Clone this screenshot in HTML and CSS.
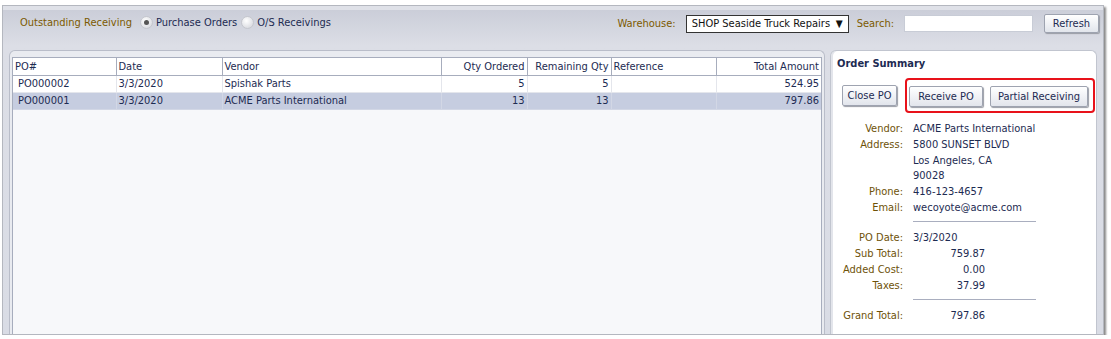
FILE: index.html
```html
<!DOCTYPE html>
<html>
<head>
    <title>Outstanding Receiving</title>
    <link rel="stylesheet" href="styles.css">
</head>
<body>
    <div class="window">
        <div class="toolbar">
            <span class="label">Outstanding Receiving</span>
            <label class="radio"><span class="dot checked"></span>Purchase Orders</label>
            <label class="radio"><span class="dot"></span>O/S Receivings</label>
            <span class="spacer"></span>
            <span class="label">Warehouse:</span>
            <div class="select">SHOP Seaside Truck Repairs <span class="arrow">&#9660;</span></div>
            <span class="label">Search:</span>
            <input class="search" type="text">
            <button class="btn refresh">Refresh</button>
        </div>

        <div class="panels">
            <div class="panel list">
                <div class="grid">
                    <table>
                        <thead>
                            <tr>
                                <th class="c-po">PO#</th>
                                <th class="c-date">Date</th>
                                <th class="c-vendor">Vendor</th>
                                <th class="c-num c-qty">Qty Ordered</th>
                                <th class="c-num c-rem">Remaining Qty</th>
                                <th class="c-ref">Reference</th>
                                <th class="c-num c-total">Total Amount</th>
                            </tr>
                        </thead>
                        <tbody>
                            <tr>
                                <td class="c-po">PO000002</td>
                                <td>3/3/2020</td>
                                <td>Spishak Parts</td>
                                <td class="c-num">5</td>
                                <td class="c-num">5</td>
                                <td></td>
                                <td class="c-num">524.95</td>
                            </tr>
                            <tr class="selected">
                                <td class="c-po">PO000001</td>
                                <td>3/3/2020</td>
                                <td>ACME Parts International</td>
                                <td class="c-num">13</td>
                                <td class="c-num">13</td>
                                <td></td>
                                <td class="c-num">797.86</td>
                            </tr>
                        </tbody>
                    </table>
                </div>
            </div>

            <div class="panel summary">
                <h3>Order Summary</h3>
                <div class="actions">
                    <button class="btn close">Close PO</button>
                    <div class="highlight">
                        <button class="btn receive">Receive PO</button>
                        <button class="btn partial">Partial Receiving</button>
                    </div>
                </div>

                <div class="details">
                    <span class="k">Vendor:</span><span class="v">ACME Parts International</span>
                    <span class="k">Address:</span><span class="v">5800 SUNSET BLVD</span>
                    <span class="k"></span><span class="v">Los Angeles, CA<br>90028</span>
                    <span class="k">Phone:</span><span class="v">416-123-4657</span>
                    <span class="k">Email:</span><span class="v">wecoyote@acme.com</span>
                    <span class="rule"></span>
                    <span class="k">PO Date:</span><span class="v">3/3/2020</span>
                    <span class="k">Sub Total:</span><span class="v amt">759.87</span>
                    <span class="k">Added Cost:</span><span class="v amt">0.00</span>
                    <span class="k">Taxes:</span><span class="v amt">37.99</span>
                    <span class="rule"></span>
                    <span class="k">Grand Total:</span><span class="v amt">797.86</span>
                </div>
            </div>
        </div>
    </div>
</body>
</html>
```

FILE: styles.css
```css
/* base */
body {
    margin: 0;
    background: #ffffff;
    font-family: Tahoma, "DejaVu Sans Condensed", "Liberation Sans", sans-serif;
    font-size: 11px;
    color: #1d2b52;
}

/* outer frame */
.window {
    margin: 5px 7px 0 2px;
    height: 328px;
    border: 1px solid #b4b7bf;
    box-shadow: 2px 2px 2px #8a8a8a;
    background: linear-gradient(#c9ccd7, #dcdee6 40px, #d9dce5);
    display: flex;
    flex-direction: column;
    overflow: hidden;
}

/* top bar */
.toolbar {
    flex: none;
    display: flex;
    align-items: center;
    height: 27px;
    padding: 0 4px 0 17px;
    border-top: 4px solid #dfe1e8;
    gap: 4px;
    white-space: nowrap;
}
.label {
    color: #7c5a00;
    margin-right: 6px;
}
.toolbar > .label:first-child {
    margin: -3px 4px 0 0;
}
.radio {
    display: flex;
    align-items: center;
    margin: -3px 0 0 0;
    color: #1d2b52;
}
.dot {
    width: 13px;
    height: 13px;
    border-radius: 50%;
    margin-right: 3px;
    background: radial-gradient(circle at 40% 35%, #ffffff, #d0d2d9);
    border: 1px solid #c5c7ce;
    box-sizing: border-box;
    position: relative;
}
.dot.checked::after {
    content: "";
    position: absolute;
    left: 3px;
    top: 3px;
    width: 5px;
    height: 5px;
    border-radius: 50%;
    background: #555;
}
.spacer { flex: 1; }
.select {
    width: 163px;
    height: 18px;
    box-sizing: border-box;
    border: 1px solid #333;
    background: #fff;
    color: #111;
    padding: 0 5px;
    display: flex;
    align-items: center;
    justify-content: space-between;
    margin-right: 4px;
}
.arrow { font-size: 10px; }
.search {
    width: 129px;
    height: 17px;
    box-sizing: border-box;
    border: 1px solid #c8ccd6;
    margin: 0 7px 0 0;
}
.btn {
    font-family: inherit;
    font-size: 11px;
    color: #1d2b52;
    height: 19px;
    padding: 0 7px;
    white-space: nowrap;
    border: 1px solid #9ea3b0;
    border-radius: 2px;
    background: linear-gradient(#ffffff, #e2e5ec);
    box-shadow: 1px 1px 1px #9a9da6;
    cursor: pointer;
}
.refresh { width: 55px; }

/* panels */
.panels {
    flex: 1;
    min-height: 0;
    display: flex;
    gap: 5px;
    padding: 13px 6px 0 6px;
}
.panel {
    border: 1px solid #b9bdc9;
    border-bottom: none;
    border-radius: 6px 6px 0 0;
    background: #e9ebf0;
}
.list {
    flex: none;
    width: 816px;
    box-sizing: border-box;
    padding: 6px 2px 0 2px;
    display: flex;
}
.grid {
    flex: 1;
    border: 1px solid #a7adbd;
    border-bottom: none;
    background: #f7f8fa;
}
table {
    width: 100%;
    border-collapse: collapse;
    table-layout: fixed;
}
th {
    box-sizing: border-box;
    font-weight: normal;
    text-align: left;
    color: #1d2b52;
    height: 17px;
    padding: 0 2px;
    background: #ffffff;
    border-right: 1px solid #a7adbd;
    border-bottom: 1px solid #a7adbd;
}
td {
    height: 16px;
    padding: 0 2px;
    background: #ffffff;
    border-right: 1px solid #e4e6ec;
    border-bottom: 1px solid #e4e6ec;
    white-space: nowrap;
}
tr.selected td { background: #c6cde0; border-color: #d2d7e5; }
.c-po { width: 103px; }
td.c-po { padding-left: 5px; }
.c-date { width: 106px; }
.c-vendor { width: 219px; }
.c-qty { width: 86px; }
.c-rem { width: 84px; }
.c-ref { width: 105px; }
.c-num { text-align: right; }
th:last-child, td:last-child { border-right: none; }

/* order summary */
.summary {
    flex: 1;
    min-width: 0;
    padding: 0 0 0 2px;
    background: #ffffff;
    border-color: #c1c5cf;
    box-shadow: inset 2px 0 0 #e3e5eb;
}
.summary h3 {
    margin: 6px 0 0 4px;
    font-size: 11px;
    line-height: 13px;
    font-weight: bold;
    color: #1d2b52;
}
.actions {
    display: flex;
    align-items: center;
    margin: 8px 0 0 9px;
}
.actions .btn {
    height: 21px;
}
.close { width: 55px; padding: 0; }
.receive { width: 74px; padding: 0; }
.partial { width: 98px; padding: 0; }
.highlight {
    display: flex;
    gap: 7px;
    margin-left: 8px;
    padding: 6px 5px 4px 2px;
    border: 2px solid #e8121a;
    border-radius: 4px;
}
.details {
    display: grid;
    grid-template-columns: 70px 123px;
    column-gap: 10px;
    row-gap: 1px;
    margin: 8px 0 0 0;
    line-height: 15px;
}
.k {
    text-align: right;
    color: #6e5208;
}
.v { color: #1d2b52; }
.amt {
    text-align: right;
    padding-right: 51px;
}
.rule {
    grid-column: 2;
    height: 1px;
    background: #a9aebf;
    margin: 5px 0 7px;
}
```
